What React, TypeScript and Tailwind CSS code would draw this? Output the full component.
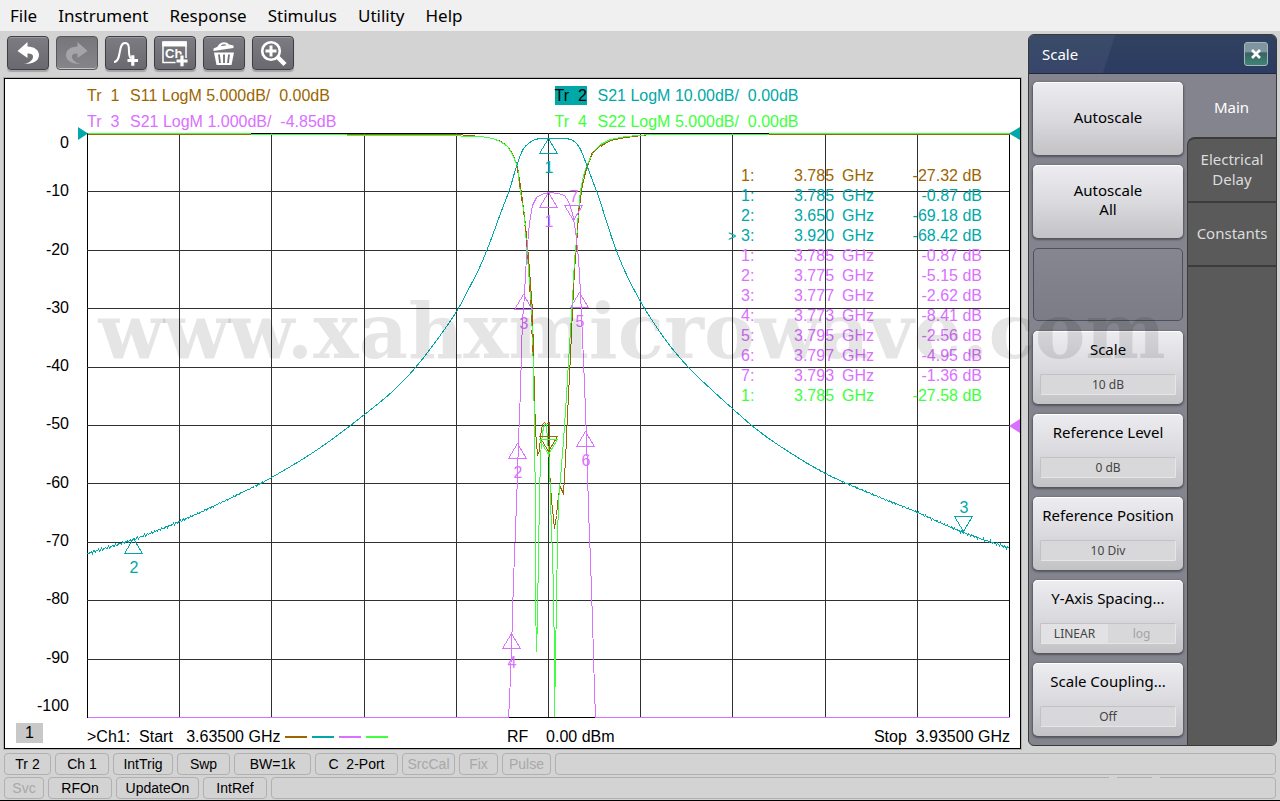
import type { ReactNode } from "react";
import clsx from "clsx";

type Point = [number, number];

const MENUS = ["File", "Instrument", "Response", "Stimulus", "Utility", "Help"];

const BROWN = "#9c6500";
const TEAL = "#00a8a8";
const PINK = "#da70ff";
const GREEN = "#40ff40";

const LEVELS = ["0", "-10", "-20", "-30", "-40", "-50", "-60", "-70", "-80", "-90", "-100"];

const READOUT = [
    { active: false, id: "1:", freq: "3.785", value: "-27.32 dB", color: "text-[#9c6500]" },
    { active: false, id: "1:", freq: "3.785", value: "-0.87 dB", color: "text-[#00a8a8]" },
    { active: false, id: "2:", freq: "3.650", value: "-69.18 dB", color: "text-[#00a8a8]" },
    { active: true, id: "3:", freq: "3.920", value: "-68.42 dB", color: "text-[#00a8a8]" },
    { active: false, id: "1:", freq: "3.785", value: "-0.87 dB", color: "text-[#da70ff]" },
    { active: false, id: "2:", freq: "3.775", value: "-5.15 dB", color: "text-[#da70ff]" },
    { active: false, id: "3:", freq: "3.777", value: "-2.62 dB", color: "text-[#da70ff]" },
    { active: false, id: "4:", freq: "3.773", value: "-8.41 dB", color: "text-[#da70ff]" },
    { active: false, id: "5:", freq: "3.795", value: "-2.56 dB", color: "text-[#da70ff]" },
    { active: false, id: "6:", freq: "3.797", value: "-4.95 dB", color: "text-[#da70ff]" },
    { active: false, id: "7:", freq: "3.793", value: "-1.36 dB", color: "text-[#da70ff]" },
    { active: false, id: "1:", freq: "3.785", value: "-27.58 dB", color: "text-[#40ff40]" },
];

const MARKERS = [
    { x: 548, y: 138, label: "1", color: TEAL, down: false },
    { x: 133, y: 538, label: "2", color: TEAL, down: false },
    { x: 963, y: 531, label: "3", color: TEAL, down: true },
    { x: 548, y: 192, label: "1", color: PINK, down: false },
    { x: 517, y: 443, label: "2", color: PINK, down: false },
    { x: 523, y: 294, label: "3", color: PINK, down: false },
    { x: 511, y: 633, label: "4", color: PINK, down: false },
    { x: 579, y: 292, label: "5", color: PINK, down: false },
    { x: 585, y: 431, label: "6", color: PINK, down: false },
    { x: 573, y: 220, label: "7", color: PINK, down: true },
    { x: 548, y: 451, label: "", color: BROWN, down: true },
    { x: 548, y: 454, label: "", color: GREEN, down: true },
];

const S21: Point[] = [
    [87, 553], [133, 539], [179, 521], [225, 500], [271, 477], [320, 447], [364, 414], [393, 390], [415, 367],
    [436, 340], [456, 311], [470, 285], [480, 265], [489, 243], [500, 213], [509, 189], [516, 166], [522, 150],
    [528, 143], [535, 139], [545, 138], [560, 138], [570, 139], [576, 143], [581, 151], [586, 164], [592, 180],
    [598, 196], [606, 221], [614, 245], [625, 272], [640, 301], [653, 322], [670, 346], [690, 369], [712, 390],
    [733, 409], [755, 428], [780, 446], [825, 473], [870, 493], [917, 512], [963, 532], [1010, 548],
];

const S21_FINE: Point[] = [
    [87, 717], [508, 717], [509, 700], [511, 650], [513, 580], [515, 530], [517, 475], [518, 440], [520, 390],
    [521, 350], [522, 320], [524, 295], [525, 272], [527, 245], [529, 222], [532, 205], [536, 197], [541, 194],
    [548, 192], [558, 193], [564, 195], [568, 201], [572, 213], [575, 230], [578, 258], [580, 292], [583, 360],
    [585, 410], [587, 470], [588, 510], [590, 560], [592, 620], [594, 690], [595, 717], [1009, 717],
];

const S11: Point[] = [
    [87, 134], [456, 134], [480, 136], [492, 138], [501, 141], [508, 147], [513, 155], [517, 166], [520, 186],
    [524, 215], [527, 245], [529, 270], [532, 310], [533, 355], [534, 395], [535, 430], [537, 455], [539, 450],
    [540, 435], [542, 424], [544, 422], [546, 424], [549, 422], [549, 470], [551, 500], [553, 518], [554, 528],
    [556, 515], [558, 494], [560, 487], [563, 493], [565, 460], [567, 415], [570, 355], [572, 310], [574, 270],
    [576, 245], [578, 215], [581, 190], [584, 176], [587, 165], [592, 153], [600, 145], [610, 140], [625, 137],
    [650, 134], [1009, 134],
];

const S22: Point[] = [
    [87, 133], [250, 133], [251, 134], [440, 135], [480, 136], [492, 138], [500, 141], [507, 146], [512, 154],
    [517, 166], [519, 185], [524, 215], [526, 245], [528, 270], [531, 310], [533, 370], [534, 430], [535, 510],
    [535, 600], [536, 651], [537, 617], [538, 550], [539, 500], [540, 455], [542, 432], [544, 424], [546, 424],
    [547, 440], [549, 462], [550, 500], [552, 556], [553, 590], [554, 660], [554, 717], [555, 660], [556, 600],
    [557, 540], [558, 500], [560, 478], [563, 440], [566, 395], [569, 345], [572, 300], [574, 260], [576, 240],
    [578, 210], [580, 190], [583, 175], [587, 164], [592, 152], [600, 144], [610, 139], [625, 136], [650, 134],
    [768, 134], [769, 133], [1009, 133],
];

const STATUS_TOP = [
    { label: "Tr 2", width: "w-[47px]" },
    { label: "Ch 1", width: "w-[54px]" },
    { label: "IntTrig", width: "w-[60px]" },
    { label: "Swp", width: "w-[53px]" },
    { label: "BW=1k", width: "w-[77px]" },
    { label: "C  2-Port", width: "w-[83px]" },
    { label: "SrcCal", width: "w-[53px]", off: true },
    { label: "Fix", width: "w-[39px]", off: true },
    { label: "Pulse", width: "w-[49px]", off: true },
];

const STATUS_BOTTOM = [
    { label: "Svc", width: "w-[40px]", off: true },
    { label: "RFOn", width: "w-[64px]" },
    { label: "UpdateOn", width: "w-[83px]" },
    { label: "IntRef", width: "w-[64px]" },
];

function polyline(points: Point[]) {
    return points.map(([x, y]) => `${x + 0.5},${y + 0.5}`).join(" ");
}

// Smooth curve through the points; it gets noisy as it falls towards the noise floor
function noisyTrace(points: Point[]) {
    const out: string[] = [];
    const slope = (i: number) => {
        const [xa, ya] = points[Math.max(0, i - 1)];
        const [xb, yb] = points[Math.min(points.length - 1, i + 1)];
        return (yb - ya) / (xb - xa);
    };
    for (let i = 0; i < points.length - 1; i++) {
        const [x0, y0] = points[i];
        const [x1, y1] = points[i + 1];
        const w = x1 - x0;
        for (let x = x0; x < x1; x++) {
            const t = (x - x0) / w;
            const y =
                y0 * (2 * t ** 3 - 3 * t ** 2 + 1) +
                slope(i) * w * (t ** 3 - 2 * t ** 2 + t) +
                y1 * (3 * t ** 2 - 2 * t ** 3) +
                slope(i + 1) * w * (t ** 3 - t ** 2);
            const depth = Math.max(0, (y - 450) / 60);
            const noise = Math.sin(x * 12.9898) * Math.cos(x * 4.1) * depth;
            out.push(`${x + 0.5},${(y + noise + 0.5).toFixed(1)}`);
        }
    }
    return out.join(" ");
}

function ToolButton({ label, pressed, children }: { label: string; pressed?: boolean; children: ReactNode }) {
    return (
        <button
            type="button"
            aria-label={label}
            disabled={pressed}
            className={clsx(
                "h-[34px] w-[42px] rounded border",
                pressed
                    ? "border-[#55555a] bg-linear-to-b from-[#77777b] to-[#85858a] shadow-[inset_0_-1px_0_#c4c4c6]"
                    : "border-[#3e3e44] bg-linear-to-b from-[#7c7c82] to-[#69696f] shadow-[0_2px_1px_#a4a4a4,inset_0_1px_0_#9a9aa0]",
            )}
        >
            <svg viewBox="1 1 40 32" className="h-8 w-10" aria-hidden="true">
                {children}
            </svg>
        </button>
    );
}

function Toolbar() {
    return (
        <div className="flex h-[47px] gap-[7px] pt-[5px] pl-[7px]">
            <ToolButton label="Undo">
                <path d="M10.5 15 20.5 6 V10.500 C27 10.500 32 14 32 19 C32 25 26 28 17 28 C23 26.500 26 24 26 20.500 C26 18.500 24.500 17.500 20.500 17.500 V22 Z" fill="#fff" />
            </ToolButton>
            <ToolButton label="Redo" pressed>
                <path d="M31.5 15 21.5 6 V10.500 C15 10.500 10 14 10 19 C10 25 16 28 25 28 C19 26.500 16 24 16 20.500 C16 18.500 17.500 17.500 21.500 17.500 V22 Z" fill="#a5a5a9" />
            </ToolButton>
            <ToolButton label="Add trace">
                <path d="M9 26 C17 26 12.500 7 20 7 C27 7 21.500 19 26 22.500" fill="none" stroke="#fff" strokeWidth="2" />
                <path d="M22.500 24.500 H33 M27.800 19.200 V29.800" stroke="#fff" strokeWidth="3.200" />
            </ToolButton>
            <ToolButton label="Add channel">
                <path d="M9 6 H32 V26.500 H9 Z" fill="none" stroke="#fff" strokeWidth="1.500" />
                <path d="M8.300 5.500 H32.700 V10.500 H8.300 Z" fill="#fff" />
                <text x="11" y="22" fill="#fff" className="font-['Liberation_Sans'] text-[13px] font-bold">Ch</text>
                <path d="M21.500 25 H34.500 M28 18.500 V31" stroke="#707076" strokeWidth="6" />
                <path d="M22.500 25 H33.500 M28 19.500 V30.300" stroke="#fff" strokeWidth="3.200" />
            </ToolButton>
            <ToolButton label="Delete">
                <path d="M10.500 12.500 L14.500 10.800 C16 6 23 4.500 26 8.500 L30.500 9.500 V12 L10.500 15 Z" fill="#fff" />
                <path d="M17.500 10.300 C19 8 22 7.500 23.500 9.300 Z" fill="#77777d" />
                <path d="M11 16.500 H31 L28.500 29 H13.500 Z" fill="#fff" />
                <path d="M16 18.500 L17 27 M21 18.500 V27 M26 18.500 L25 27" stroke="#6d6d73" strokeWidth="1.800" />
            </ToolButton>
            <ToolButton label="Zoom">
                <path d="M25 20.500 L33 28.500" stroke="#fff" strokeWidth="4.500" />
                <circle cx="19" cy="15" r="8.800" fill="none" stroke="#fff" strokeWidth="2.600" />
                <path d="M13.500 15 H24.500 M19 9.500 V20.500" stroke="#fff" strokeWidth="3" />
            </ToolButton>
        </div>
    );
}

function TraceLabel({ name, text, color, selected }: { name: string; text: string; color: string; selected?: boolean }) {
    return (
        <button type="button" className={clsx("flex h-[26px] items-center pt-1 text-left whitespace-pre", color)}>
            <span className="w-[43px]">
                <span className={clsx(selected && "bg-[#00a8a8] py-px text-black")}>{name}</span>
            </span>
            {text}
        </button>
    );
}

function Plot() {
    const steps = Array.from({ length: 11 }, (_, i) => i);

    return (
        <svg viewBox="87 133 923 585" className="block h-auto w-full overflow-visible" role="img" aria-label="S-parameter traces">
            <g shapeRendering="crispEdges" fill="none">
                {steps.map((i) => (
                    <path
                        key={i}
                        d={`M${87.5 + Math.round(i * 92.2)} 133 V718 M87 ${133.5 + Math.round(i * 58.4)} H1010`}
                        stroke={i === 0 || i === 10 ? "#000" : "#303030"}
                    />
                ))}
                <polyline points={polyline(S11)} stroke={BROWN} />
                <polyline points={polyline(S22)} stroke={GREEN} />
                <path d="M517 166 L524 215 L529 270 L533 355 M573 290 L578 215 L584 176 L592 153 L610 140" stroke={BROWN} strokeDasharray="7 8" />
                <polyline points={noisyTrace(S21)} stroke={TEAL} />
                <polyline points={polyline(S21_FINE)} stroke={PINK} />
                <path d="M509 717.500 H595" stroke="#000" />
                {MARKERS.map((m, i) => {
                    const dir = m.down ? -1 : 1;
                    return (
                        <path
                            key={i}
                            d={`M${m.x + 0.5} ${m.y + 0.5} l9 ${15 * dir} h-18 Z`}
                            stroke={m.color}
                        />
                    );
                })}
            </g>
            <path d="M78 127 L88 133.500 L78 140 Z M1020 127 L1009 133.500 L1020 140 Z" fill={TEAL} />
            <path d="M1020 419 L1009 426 L1020 433 Z" fill={PINK} />
            {MARKERS.map((m, i) => (
                <text
                    key={i}
                    x={m.x + 1}
                    y={m.down ? m.y - 18 : m.y + 35}
                    fill={m.color}
                    textAnchor="middle"
                    className="text-base"
                >
                    {m.label}
                </text>
            ))}
        </svg>
    );
}

function ChartWindow() {
    return (
        <section className="ml-1 border border-black bg-white font-['Liberation_Sans',Arial,sans-serif] text-base text-black shadow-[0_0_0_1px_#b0b0b0]">
            <div className="mr-[10px] ml-[82px] grid grid-cols-2 gap-x-3 pt-[2px]">
                <TraceLabel name="Tr  1" text="S11 LogM 5.000dB/  0.00dB" color="text-[#9c6500]" />
                <TraceLabel name="Tr  2" text="S21 LogM 10.00dB/  0.00dB" color="text-[#00a8a8]" selected />
                <TraceLabel name="Tr  3" text="S21 LogM 1.000dB/  -4.85dB" color="text-[#da70ff]" />
                <TraceLabel name="Tr  4" text="S22 LogM 5.000dB/  0.00dB" color="text-[#40ff40]" />
            </div>

            <div className="flex">
                <div className="flex w-[82px] flex-col pr-[18px] pb-[2px] text-right leading-5">
                    {LEVELS.map((level, i) => (
                        <div
                            key={level}
                            className={clsx(
                                "flex justify-end",
                                i === 0 && "flex-1 items-start",
                                i === 10 && "flex-1 items-end",
                                i > 0 && i < 10 && "flex-2 items-center",
                            )}
                        >
                            {level}
                        </div>
                    ))}
                </div>
                <div className="relative mr-[10px] flex-1">
                    <Plot />
                    <table className="absolute top-[33px] right-7 leading-5">
                        <tbody>
                            {READOUT.map((row, i) => (
                                <tr key={i} className={row.color}>
                                    <td className="w-[13px] p-0 text-sm leading-5">{row.active ? ">" : ""}</td>
                                    <td className="w-[53px] p-0">{row.id}</td>
                                    <td className="w-12 p-0">{row.freq}</td>
                                    <td className="w-[60px] p-0">GHz</td>
                                    <td className="w-20 p-0 text-right">{row.value}</td>
                                </tr>
                            ))}
                        </tbody>
                    </table>
                </div>
            </div>

            <div className="mr-[10px] flex h-[30px] items-center pt-2 whitespace-pre">
                <div className="flex w-[82px] items-center pb-2 pl-[11px]">
                    <span className="h-5 w-[27px] bg-[#c8c8c8] text-center leading-5">1</span>
                </div>
                <div className="flex w-[420px] items-center">
                    {">Ch1:  Start   3.63500 GHz"}
                    <div className="ml-[5px] flex gap-[5px]">
                        <span className="h-[2px] w-[22px] bg-[#9c6500]" />
                        <span className="h-[2px] w-[22px] bg-[#00a8a8]" />
                        <span className="h-[2px] w-[22px] bg-[#da70ff]" />
                        <span className="h-[2px] w-[22px] bg-[#40ff40]" />
                    </div>
                </div>
                <span>{"RF    0.00 dBm"}</span>
                <span className="ml-auto">{"Stop  3.93500 GHz"}</span>
            </div>
        </section>
    );
}

function SoftKey({ label, children }: { label: string; children?: ReactNode }) {
    return (
        <button
            type="button"
            className="flex h-[73px] flex-col rounded-[5px] bg-linear-to-b from-[#ededf1] via-[#dadadf] to-[#c3c3c6] px-[7px] pb-[9px] text-[15px] text-black shadow-[0_1px_2px_1px_#55555e,inset_0_1px_0_#fff]"
        >
            <span
                className={clsx(
                    "flex w-full flex-1 items-center justify-center leading-[19px] whitespace-pre",
                    children ? "pb-[7px]" : "pt-[6px]",
                )}
            >
                {label}
            </span>
            {children}
        </button>
    );
}

function KeyValue({ children }: { children: ReactNode }) {
    return (
        <span className="flex h-[21px] w-full items-center justify-center rounded-[2px] border border-[#c2c2c6] border-r-[#e6e6e8] border-b-[#e6e6e8] bg-[#d8d8da] text-xs text-[#444]">
            {children}
        </span>
    );
}

function ScalePanel() {
    return (
        <aside className="mt-[3px] mr-[3px] ml-[7px] flex w-[249px] flex-col self-stretch rounded-md border border-[#3a3a38] bg-[#84848e] font-['Noto_Sans',Tahoma,sans-serif]">
            <header className="relative flex h-[39px] items-center justify-between overflow-hidden rounded-t-[5px] border-b border-[#22293c] bg-linear-to-b from-[#304260] to-[#2c3b62] pr-[8px] pl-[13px]">
                <span className="absolute top-0 -left-3 h-full w-[92px] -skew-x-[18deg] bg-white/5" />
                <h2 className="relative text-[15px] text-white">Scale</h2>
                <button
                    type="button"
                    aria-label="Close"
                    className="flex size-6 items-center justify-center rounded-[3px] border border-[#a9b4bd] bg-linear-to-b from-[#7f95a0] from-40% via-[#35655f] via-45% to-[#3f8478] text-white"
                >
                    <svg viewBox="0 0 12 12" className="size-3" aria-hidden="true">
                        <path d="M2 2 L10 10 M10 2 L2 10" stroke="#fff" strokeWidth="2.600" />
                    </svg>
                </button>
            </header>

            <div className="flex flex-1">
                <div className="flex w-[158px] flex-col gap-[10px] px-1 py-2">
                    <SoftKey label="Autoscale" />
                    <SoftKey label={"Autoscale\nAll"} />
                    <div className="h-[73px] rounded-[5px] border border-[#50505a] bg-linear-to-b from-[#868690] to-[#7c7c86]" />
                    <SoftKey label="Scale">
                        <KeyValue>10 dB</KeyValue>
                    </SoftKey>
                    <SoftKey label="Reference Level">
                        <KeyValue>0 dB</KeyValue>
                    </SoftKey>
                    <SoftKey label="Reference Position">
                        <KeyValue>10 Div</KeyValue>
                    </SoftKey>
                    <SoftKey label="Y-Axis Spacing...">
                        <KeyValue>
                            <span className="flex h-full flex-1 items-center justify-center bg-[#e2e2e4]">LINEAR</span>
                            <span className="flex-1 text-[#a4a4a6]">log</span>
                        </KeyValue>
                    </SoftKey>
                    <SoftKey label="Scale Coupling...">
                        <KeyValue>Off</KeyValue>
                    </SoftKey>
                </div>

                <nav className="flex flex-1 flex-col text-[15px] leading-5 text-[#dcdcdc]">
                    <button type="button" className="h-[63px] pt-[2px] text-white">Main</button>
                    <div className="flex flex-1 flex-col rounded-tl-lg rounded-br-[5px] border-t-2 border-l border-[#3c3c36] bg-[#5a5a5a]">
                        <button type="button" className="h-16 border-b-2 border-[#3c3c3c] px-2 pb-[2px]">Electrical Delay</button>
                        <button type="button" className="h-16 border-b-2 border-[#3c3c3c] pb-[2px]">Constants</button>
                    </div>
                </nav>
            </div>
        </aside>
    );
}

function StatusRow({ items, children }: { items: { label: string; width: string; off?: boolean }[]; children?: ReactNode }) {
    return (
        <div className="flex h-[22px] gap-1">
            {items.map((item) => (
                <button
                    key={item.label}
                    type="button"
                    disabled={item.off}
                    className={clsx(
                        "flex items-center justify-center rounded border border-[#b0b0b0] whitespace-pre",
                        item.width,
                        item.off ? "text-[#a8a8a8]" : "text-black",
                    )}
                >
                    {item.label}
                </button>
            ))}
            <div className="relative flex-1 rounded border border-[#b0b0b0]">{children}</div>
        </div>
    );
}

export default function App() {
    return (
        <div className="flex min-h-screen flex-col border-b border-black bg-[#d3d3d3]">
            <nav className="flex h-[31px] items-center gap-px bg-[#f0f0f0] font-['Noto_Sans',Tahoma,sans-serif] text-[17px] text-black">
                {MENUS.map((menu) => (
                    <button key={menu} type="button" className="px-[10px]">{menu}</button>
                ))}
            </nav>

            <main className="relative flex">
                <div className="min-w-0 flex-1">
                    <Toolbar />
                    <ChartWindow />
                </div>
                <div className="flex pb-[3px]">
                    <ScalePanel />
                </div>
                <div className="pointer-events-none absolute inset-x-0 top-[244px] pr-4 text-center font-['DejaVu_Serif',serif] text-[76px] font-bold text-black/10">
                    www.xahxmicrowave.com
                </div>
            </main>

            <footer className="mt-1 flex flex-col gap-[2px] px-1 font-['Liberation_Sans',Arial,sans-serif] text-sm">
                <StatusRow items={STATUS_TOP} />
                <StatusRow items={STATUS_BOTTOM}>
                    {/* Breaks in the upper edge between the message fields */}
                    <span className="absolute -top-px right-[158px] h-1 w-2 bg-[#d3d3d3]" />
                    <span className="absolute -top-px right-[115px] h-1 w-2 bg-[#d3d3d3]" />
                </StatusRow>
            </footer>
        </div>
    );
}
